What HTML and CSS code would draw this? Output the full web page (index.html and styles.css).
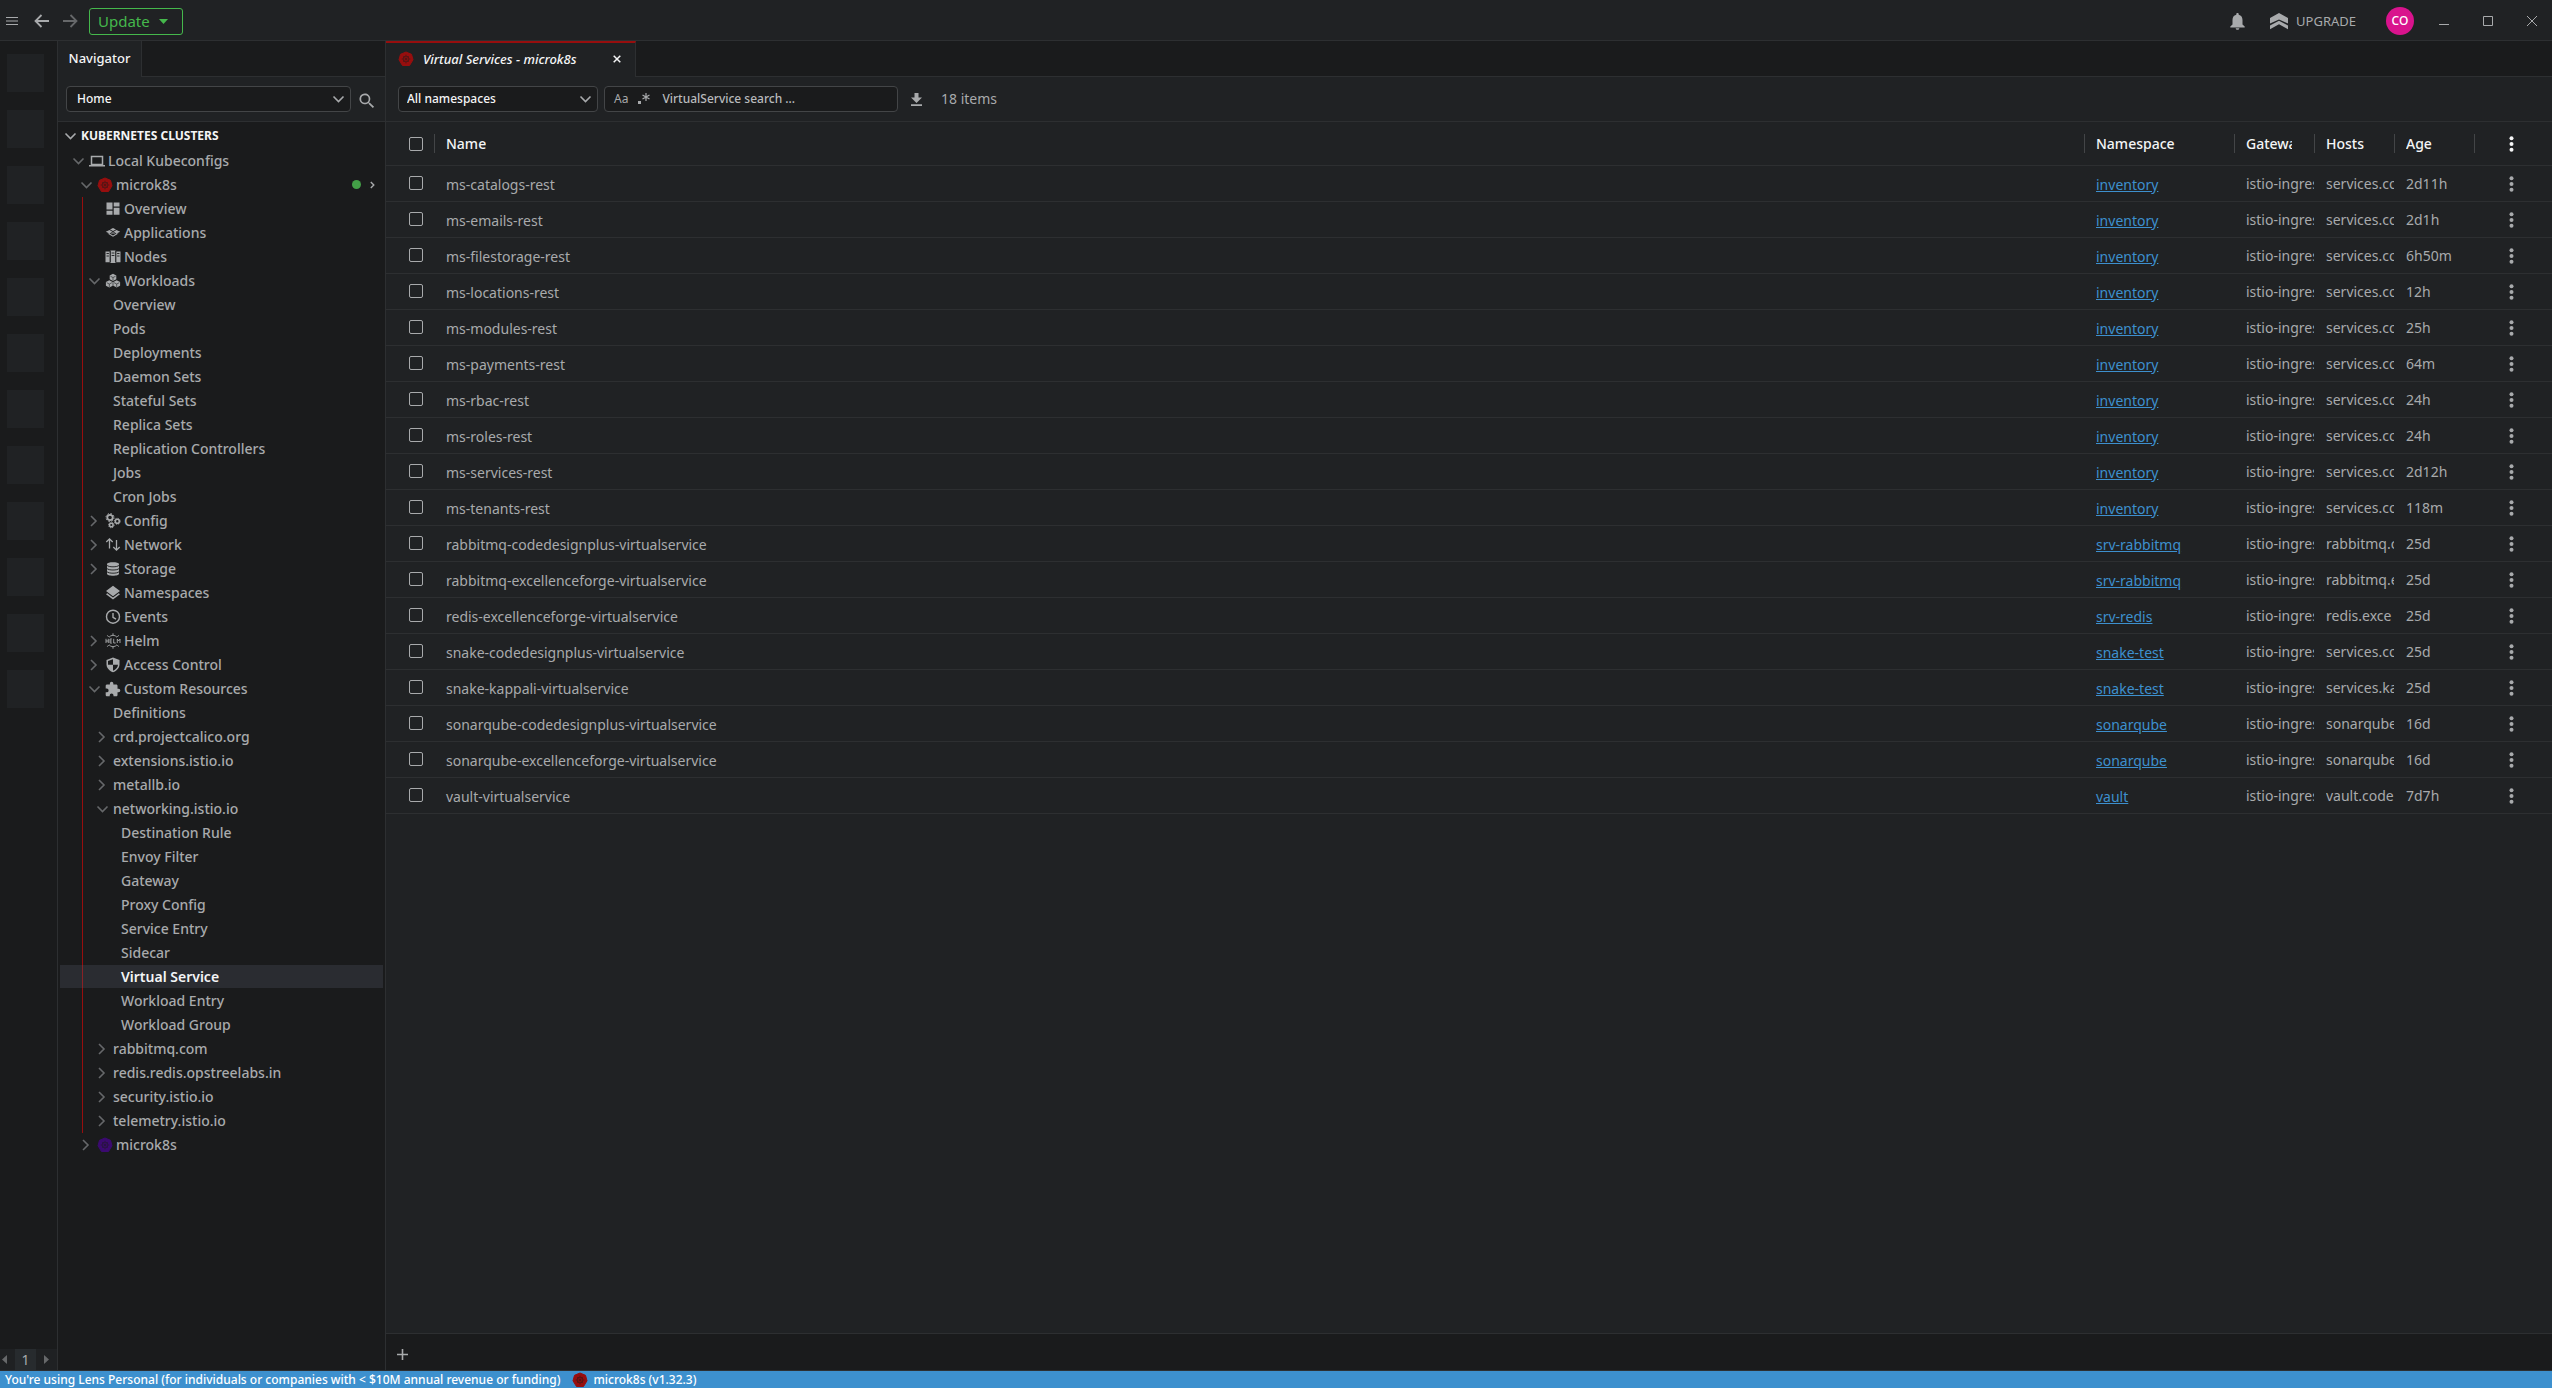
FILE: index.html
```html
<!DOCTYPE html>
<html lang="en">
<head>
<meta charset="utf-8">
<title>Virtual Services - microk8s</title>
<link rel="stylesheet" href="styles.css">
</head>
<body>
<svg class="defs" aria-hidden="true">
  <symbol id="down" viewBox="0 0 16 16"><path d="M2.500 5.500l5 5 5-5" fill="none" stroke="currentColor" stroke-width="1.600"/></symbol>
  <symbol id="right" viewBox="0 0 16 16"><path d="M4 3l5 5-5 5" fill="none" stroke="currentColor" stroke-width="1.600"/></symbol>
  <symbol id="laptop" viewBox="0 0 16 16"><path d="M2.500 3.500h11v8h-11zM0 12.700h16" fill="none" stroke="currentColor" stroke-width="1.500"/></symbol>
  <symbol id="k8s" viewBox="0 0 16 16"><path d="M8 1L13.500 3.300L15 8.800L11.500 14.500H4.500L1 8.800L2.500 3.300z" fill="currentColor" stroke="currentColor" stroke-linejoin="round"/><g fill="none" stroke="#1a1b1c" stroke-opacity=".5"><circle cx="8" cy="8" r="3"/><path d="M8 3.500v9M3.500 8h9M5 5l6 6M11 5l-6 6" stroke-width=".6"/></g></symbol>
  <symbol id="overview" viewBox="0 0 16 16"><path d="M1.500 1.500h6v7h-6zM8.700 1.500h5.800v4H8.700zM1.500 9.700h6v4h-6zM8.700 6.700h5.800v7H8.700z" fill="currentColor"/></symbol>
  <symbol id="apps" viewBox="0 0 16 16"><path d="M8 3l3 1.500L8 6 5 4.500zM4.500 5l3 1.700-3 1.700-3.700-1.700zM11.500 5l3.700 1.700-3.700 1.700-3-1.700zM8 7.300l3 1.500-3 1.700-3-1.700zM2.500 8.500L8 11.700l5.500-3.200" fill="currentColor"/></symbol>
  <symbol id="nodes" viewBox="0 0 16 16"><path d="M.5 2.500h4.400v10.800H.5zM5.500 1.500h5v12.500h-5zM11.100 2.500h4.400v10.800h-4.400z" fill="currentColor"/><path d="M1.500 4.500h2.400M1.500 7h2.400M6.600 4h2.800M6.600 6.500h2.800M12.100 4.500h2.400M12.100 7h2.400M5.200 2v11M10.800 2v11" stroke="#1a1b1c" stroke-width=".9"/></symbol>
  <symbol id="workloads" viewBox="0 0 16 16"><path d="M8 .8l3.300 1.700v3.800L8 8 4.700 6.300V2.500zM4.300 7.200l3.400 1.700v3.900l-3.400 1.700L.9 12.800V8.900zM11.700 7.200l3.400 1.700v3.900l-3.400 1.700-3.400-1.700V8.900z" fill="currentColor"/><path d="M5.500 3.300L8 4.500l2.500-1.200M1.700 9.700l2.600 1.300 2.600-1.300M9.100 9.700l2.600 1.300 2.600-1.300M8 4.500v3M4.300 11v3M11.700 11v3" stroke="#1a1b1c" stroke-width=".6" fill="none"/></symbol>
  <symbol id="config" viewBox="0 0 16 16"><g fill="none" stroke="currentColor"><circle cx="5" cy="4.500" r="2.700" stroke-width="1.800"/><circle cx="5" cy="4.500" r="4" stroke-width="1" stroke-dasharray="1.600 1.540"/><circle cx="12.300" cy="8.300" r="2" stroke-width="1.600"/><circle cx="12.300" cy="8.300" r="3" stroke-width=".9" stroke-dasharray="1.200 1.150"/><circle cx="6.300" cy="12" r="1.800" stroke-width="1.500"/><circle cx="6.300" cy="12" r="2.800" stroke-width=".9" stroke-dasharray="1.100 1.100"/></g></symbol>
  <symbol id="network" viewBox="0 0 16 16"><path d="M4.500 11.500V2M1.300 5l3.200-3.200L7.700 5M11.500 3v10M8.300 10l3.200 3.200L14.700 10" fill="none" stroke="currentColor" stroke-width="1.300"/></symbol>
  <symbol id="storage" viewBox="0 0 16 16"><path d="M2 3.200C2 .6 14 .6 14 3.200v9.600c0 2.600-12 2.600-12 0z" fill="currentColor"/><path d="M2 4.300c1.500 2 10.500 2 12 0M2 7.500c1.500 2 10.500 2 12 0M2 10.700c1.500 2 10.500 2 12 0" fill="none" stroke="#1a1b1c" stroke-width=".9"/></symbol>
  <symbol id="layers" viewBox="0 0 16 16"><path d="M8 .8l7 5.200-7 5.200L1 6zM2.300 8.200L8 12.500l5.700-4.300L15 9.200l-7 5.200-7-5.200z" fill="currentColor"/></symbol>
  <symbol id="clock" viewBox="0 0 16 16"><path d="M8 4v4.300l3 1.900M14.500 7.700a6.500 6.500 0 1 1-13 0 6.500 6.500 0 0 1 13 0z" fill="none" stroke="currentColor" stroke-width="1.400"/></symbol>
  <symbol id="helm" viewBox="0 0 16 16"><path d="M1 5.800v4.200M3.300 5.800v4.200M1 8h2.300M7 6H5v4h2M5 8h1.800M8.700 5.800V10h2M12.300 10V6l1.300 2L15 6v4M4 4.300a5 5 0 0 1 8 0M4 11.700a5 5 0 0 0 8 0M8 2.400V.3M8 13.600v2.100M3.700 4L2.300 2.300M12.300 4l1.400-1.700M3.700 12l-1.400 1.700M12.300 12l1.400 1.700" fill="none" stroke="currentColor" stroke-width=".9"/></symbol>
  <symbol id="shield" viewBox="0 0 16 16"><path d="M8 .5l6.500 2.400v4.400c0 3.800-2.700 6.500-6.500 8-3.800-1.500-6.500-4.200-6.500-8V2.900z" fill="currentColor"/><path d="M8 2.300v5.400H3V4.100zM8 7.700h5c-.2 2.700-2.200 4.800-5 6z" fill="#1a1b1c"/></symbol>
  <symbol id="puzzle" viewBox="1 0 23 23"><path d="M20.500 11H19V7c0-1.100-.9-2-2-2h-4V3.500a2.500 2.500 0 0 0-5 0V5H4c-1.100 0-2 .9-2 2v3.800h1.500a2.700 2.700 0 0 1 0 5.400H2V20c0 1.100.9 2 2 2h3.800v-1.500a2.700 2.700 0 0 1 5.400 0V22H17c1.100 0 2-.9 2-2v-4h1.500a2.500 2.500 0 0 0 0-5z" fill="currentColor"/></symbol>
  <symbol id="kebab" viewBox="0 0 16 16"><g fill="currentColor"><circle cx="7.500" cy="2.300" r="2"/><circle cx="7.500" cy="8" r="2"/><circle cx="7.500" cy="13.700" r="2"/></g></symbol>
  <symbol id="magnifier" viewBox="0 0 24 24"><path d="M15.500 14h-.8l-.3-.3A6.500 6.500 0 1 0 13.700 14.400l.3.300v.8l5 5 1.500-1.500zm-6 0a4.500 4.500 0 1 1 0-9 4.500 4.500 0 0 1 0 9z" fill="currentColor"/></symbol>
</svg>
<div class="app">
  <header class="titlebar">
    <button class="icon-btn menu" aria-label="Menu"><svg width="12" height="8" viewBox="0 0 12 8"><path d="M0 .5h12M0 4h12M0 7.500h12" stroke="currentColor"/></svg></button>
    <button class="icon-btn back" aria-label="Back"><svg width="15" height="14" viewBox="0 0 15 14"><path d="M15 7H1.500M7.500 1l-6 6 6 6" fill="none" stroke="currentColor" stroke-width="1.800"/></svg></button>
    <button class="icon-btn forward" aria-label="Forward"><svg width="15" height="14" viewBox="0 0 15 14"><path d="M0 7h13.500M7.500 1l6 6-6 6" fill="none" stroke="currentColor" stroke-width="1.800"/></svg></button>
    <button class="update">Update<svg width="9" height="5" viewBox="0 0 9 5"><path d="M0 0h9L4.500 5z" fill="currentColor"/></svg></button>
    <span class="spacer"></span>
    <button class="icon-btn bell" aria-label="Notifications"><svg width="15" height="17" viewBox="0 0 15 17"><path d="M7.500 0c.8 0 1.200.5 1.200 1.200v.6c2.600.6 3.800 2.600 3.800 5.200v4.500l2.200 2v1H.3v-1l2.200-2V7c0-2.600 1.200-4.600 3.800-5.200v-.6C6.300.5 6.700 0 7.500 0zM5.700 15.300h3.600c0 2-3.600 2-3.600 0z" fill="currentColor"/></svg></button>
    <button class="icon-btn upgrade"><svg width="18" height="17" viewBox="0 0 18 17"><path d="M9 0l9 5v5.500L9 6.500 0 10.500V5zM9 7.800l9 4.700v3.800l-9-5-9 5v-3.800z" fill="currentColor"/></svg>UPGRADE</button>
    <button class="avatar">CO</button>
    <button class="icon-btn win" aria-label="Minimize"><svg width="10" height="10" viewBox="0 0 10 10"><path d="M0 8.500h10" stroke="currentColor"/></svg></button>
    <button class="icon-btn win" aria-label="Maximize"><svg width="10" height="10" viewBox="0 0 10 10"><path d="M.5.5h9v9h-9z" fill="none" stroke="currentColor"/></svg></button>
    <button class="icon-btn win" aria-label="Close"><svg width="10" height="10" viewBox="0 0 10 10"><path d="M0 0l10 10M10 0L0 10" stroke="currentColor"/></svg></button>
  </header>
  <div class="body">
    <aside class="hotbar">
      <div class="slots"><i></i><i></i><i></i><i></i><i></i><i></i><i></i><i></i><i></i><i></i><i></i><i></i></div>
      <div class="pager"><button aria-label="Previous"><svg width="5" height="9" viewBox="0 0 5 9"><path d="M5 0v9L0 4.500z" fill="currentColor"/></svg></button><b>1</b><button aria-label="Next"><svg width="5" height="9" viewBox="0 0 5 9"><path d="M0 0v9l5-4.500z" fill="currentColor"/></svg></button></div>
    </aside>
    <aside class="navigator">
      <div class="tabs"><button class="tab nav-tab">Navigator</button></div>
      <div class="bar">
        <span class="select home"><select aria-label="Navigator view"><option>Home</option></select><svg><use href="#down"/></svg></span>
        <button class="icon-btn find" aria-label="Search"><svg width="20" height="20"><use href="#magnifier"/></svg></button>
      </div>
      <nav class="tree">
        <a href="#" class="l1"><svg class="ch"><use href="#down"/></svg>KUBERNETES CLUSTERS</a>
        <a href="#" class="l2"><svg class="ch"><use href="#down"/></svg><svg class="ic"><use href="#laptop"/></svg>Local Kubeconfigs</a>
        <a href="#" class="l3"><svg class="ch"><use href="#down"/></svg><svg class="ic red"><use href="#k8s"/></svg>microk8s<span class="state"><i></i><svg width="5" height="8" viewBox="0 0 5 8"><path d="M.8 1l3 3-3 3" fill="none" stroke="currentColor" stroke-width="1.400"/></svg></span></a>
        <div class="cluster">
          <a href="#" class="l4"><svg class="ic lone"><use href="#overview"/></svg>Overview</a>
          <a href="#" class="l4"><svg class="ic lone"><use href="#apps"/></svg>Applications</a>
          <a href="#" class="l4"><svg class="ic lone"><use href="#nodes"/></svg>Nodes</a>
          <a href="#" class="l4"><svg class="ch"><use href="#down"/></svg><svg class="ic"><use href="#workloads"/></svg>Workloads</a>
          <a href="#" class="l5 leaf">Overview</a>
          <a href="#" class="l5 leaf">Pods</a>
          <a href="#" class="l5 leaf">Deployments</a>
          <a href="#" class="l5 leaf">Daemon Sets</a>
          <a href="#" class="l5 leaf">Stateful Sets</a>
          <a href="#" class="l5 leaf">Replica Sets</a>
          <a href="#" class="l5 leaf">Replication Controllers</a>
          <a href="#" class="l5 leaf">Jobs</a>
          <a href="#" class="l5 leaf">Cron Jobs</a>
          <a href="#" class="l4"><svg class="ch"><use href="#right"/></svg><svg class="ic"><use href="#config"/></svg>Config</a>
          <a href="#" class="l4"><svg class="ch"><use href="#right"/></svg><svg class="ic"><use href="#network"/></svg>Network</a>
          <a href="#" class="l4"><svg class="ch"><use href="#right"/></svg><svg class="ic"><use href="#storage"/></svg>Storage</a>
          <a href="#" class="l4"><svg class="ic lone"><use href="#layers"/></svg>Namespaces</a>
          <a href="#" class="l4"><svg class="ic lone"><use href="#clock"/></svg>Events</a>
          <a href="#" class="l4"><svg class="ch"><use href="#right"/></svg><svg class="ic"><use href="#helm"/></svg>Helm</a>
          <a href="#" class="l4"><svg class="ch"><use href="#right"/></svg><svg class="ic"><use href="#shield"/></svg>Access Control</a>
          <a href="#" class="l4"><svg class="ch"><use href="#down"/></svg><svg class="ic"><use href="#puzzle"/></svg>Custom Resources</a>
          <a href="#" class="l5 leaf">Definitions</a>
          <a href="#" class="l5"><svg class="ch"><use href="#right"/></svg>crd.projectcalico.org</a>
          <a href="#" class="l5"><svg class="ch"><use href="#right"/></svg>extensions.istio.io</a>
          <a href="#" class="l5"><svg class="ch"><use href="#right"/></svg>metallb.io</a>
          <a href="#" class="l5"><svg class="ch"><use href="#down"/></svg>networking.istio.io</a>
          <a href="#" class="l6 leaf">Destination Rule</a>
          <a href="#" class="l6 leaf">Envoy Filter</a>
          <a href="#" class="l6 leaf">Gateway</a>
          <a href="#" class="l6 leaf">Proxy Config</a>
          <a href="#" class="l6 leaf">Service Entry</a>
          <a href="#" class="l6 leaf">Sidecar</a>
          <a href="#" class="l6 leaf current" aria-current="page">Virtual Service</a>
          <a href="#" class="l6 leaf">Workload Entry</a>
          <a href="#" class="l6 leaf">Workload Group</a>
          <a href="#" class="l5"><svg class="ch"><use href="#right"/></svg>rabbitmq.com</a>
          <a href="#" class="l5"><svg class="ch"><use href="#right"/></svg>redis.redis.opstreelabs.in</a>
          <a href="#" class="l5"><svg class="ch"><use href="#right"/></svg>security.istio.io</a>
          <a href="#" class="l5"><svg class="ch"><use href="#right"/></svg>telemetry.istio.io</a>
        </div>
        <a href="#" class="l3"><svg class="ch"><use href="#right"/></svg><svg class="ic purple"><use href="#k8s"/></svg>microk8s</a>
      </nav>
    </aside>
    <main class="main">
      <div class="tabs"><div class="tab main-tab"><svg class="red"><use href="#k8s"/></svg><span>Virtual Services - microk8s</span><button class="icon-btn" aria-label="Close tab"><svg width="8" height="8" viewBox="0 0 8 8"><path d="M.7.7l6.600 6.600M7.300.7L.7 7.300" stroke="currentColor" stroke-width="1.500"/></svg></button></div></div>
      <div class="bar tools">
        <span class="select ns"><select aria-label="Namespaces"><option>All namespaces</option></select><svg><use href="#down"/></svg></span>
        <div class="search"><button class="icon-btn case" aria-label="Match case">Aa</button><button class="icon-btn" aria-label="Regular expression"><svg width="14" height="14" viewBox="0 0 14 14"><path d="M1 9h3v3H1z" fill="currentColor"/><path d="M9 1v8M5.500 3l7 4M12.500 3l-7 4" stroke="currentColor" stroke-width="1.200"/></svg></button><input type="text" aria-label="Search" placeholder="VirtualService search ..."></div>
        <button class="icon-btn download" aria-label="Download"><svg width="11" height="13" viewBox="0 0 11 13"><path d="M3.500 0h4v4.500H11L5.500 10 0 4.500h3.500zM0 11.300h11V13H0z" fill="currentColor"/></svg></button>
        <span class="count">18 items</span>
      </div>
      <div class="content">
        <table>
          <colgroup><col class="c-check"><col><col class="c-ns"><col class="c-sm"><col class="c-sm"><col class="c-sm"><col class="c-menu"></colgroup>
          <thead><tr><th><div class="head check"><input type="checkbox" aria-label="Select all"></div></th><th><div class="head"><span>Name</span></div></th><th><div class="head"><span>Namespace</span></div></th><th><div class="head"><span>Gateway</span></div></th><th><div class="head"><span>Hosts</span></div></th><th><div class="head"><span>Age</span></div></th><th><button class="icon-btn dots" aria-label="Columns"><svg><use href="#kebab"/></svg></button></th></tr></thead>
          <tbody>
          <tr><td><input type="checkbox" aria-label="Select row"></td><td>ms-catalogs-rest</td><td><a href="#">inventory</a></td><td><div class="clip">istio-ingres</div></td><td><div class="clip">services.co</div></td><td>2d11h</td><td><button class="icon-btn dots" aria-label="Actions"><svg><use href="#kebab"/></svg></button></td></tr>
          <tr><td><input type="checkbox" aria-label="Select row"></td><td>ms-emails-rest</td><td><a href="#">inventory</a></td><td><div class="clip">istio-ingres</div></td><td><div class="clip">services.co</div></td><td>2d1h</td><td><button class="icon-btn dots" aria-label="Actions"><svg><use href="#kebab"/></svg></button></td></tr>
          <tr><td><input type="checkbox" aria-label="Select row"></td><td>ms-filestorage-rest</td><td><a href="#">inventory</a></td><td><div class="clip">istio-ingres</div></td><td><div class="clip">services.co</div></td><td>6h50m</td><td><button class="icon-btn dots" aria-label="Actions"><svg><use href="#kebab"/></svg></button></td></tr>
          <tr><td><input type="checkbox" aria-label="Select row"></td><td>ms-locations-rest</td><td><a href="#">inventory</a></td><td><div class="clip">istio-ingres</div></td><td><div class="clip">services.co</div></td><td>12h</td><td><button class="icon-btn dots" aria-label="Actions"><svg><use href="#kebab"/></svg></button></td></tr>
          <tr><td><input type="checkbox" aria-label="Select row"></td><td>ms-modules-rest</td><td><a href="#">inventory</a></td><td><div class="clip">istio-ingres</div></td><td><div class="clip">services.co</div></td><td>25h</td><td><button class="icon-btn dots" aria-label="Actions"><svg><use href="#kebab"/></svg></button></td></tr>
          <tr><td><input type="checkbox" aria-label="Select row"></td><td>ms-payments-rest</td><td><a href="#">inventory</a></td><td><div class="clip">istio-ingres</div></td><td><div class="clip">services.co</div></td><td>64m</td><td><button class="icon-btn dots" aria-label="Actions"><svg><use href="#kebab"/></svg></button></td></tr>
          <tr><td><input type="checkbox" aria-label="Select row"></td><td>ms-rbac-rest</td><td><a href="#">inventory</a></td><td><div class="clip">istio-ingres</div></td><td><div class="clip">services.co</div></td><td>24h</td><td><button class="icon-btn dots" aria-label="Actions"><svg><use href="#kebab"/></svg></button></td></tr>
          <tr><td><input type="checkbox" aria-label="Select row"></td><td>ms-roles-rest</td><td><a href="#">inventory</a></td><td><div class="clip">istio-ingres</div></td><td><div class="clip">services.co</div></td><td>24h</td><td><button class="icon-btn dots" aria-label="Actions"><svg><use href="#kebab"/></svg></button></td></tr>
          <tr><td><input type="checkbox" aria-label="Select row"></td><td>ms-services-rest</td><td><a href="#">inventory</a></td><td><div class="clip">istio-ingres</div></td><td><div class="clip">services.co</div></td><td>2d12h</td><td><button class="icon-btn dots" aria-label="Actions"><svg><use href="#kebab"/></svg></button></td></tr>
          <tr><td><input type="checkbox" aria-label="Select row"></td><td>ms-tenants-rest</td><td><a href="#">inventory</a></td><td><div class="clip">istio-ingres</div></td><td><div class="clip">services.co</div></td><td>118m</td><td><button class="icon-btn dots" aria-label="Actions"><svg><use href="#kebab"/></svg></button></td></tr>
          <tr><td><input type="checkbox" aria-label="Select row"></td><td>rabbitmq-codedesignplus-virtualservice</td><td><a href="#">srv-rabbitmq</a></td><td><div class="clip">istio-ingres</div></td><td><div class="clip">rabbitmq.c</div></td><td>25d</td><td><button class="icon-btn dots" aria-label="Actions"><svg><use href="#kebab"/></svg></button></td></tr>
          <tr><td><input type="checkbox" aria-label="Select row"></td><td>rabbitmq-excellenceforge-virtualservice</td><td><a href="#">srv-rabbitmq</a></td><td><div class="clip">istio-ingres</div></td><td><div class="clip">rabbitmq.e</div></td><td>25d</td><td><button class="icon-btn dots" aria-label="Actions"><svg><use href="#kebab"/></svg></button></td></tr>
          <tr><td><input type="checkbox" aria-label="Select row"></td><td>redis-excellenceforge-virtualservice</td><td><a href="#">srv-redis</a></td><td><div class="clip">istio-ingres</div></td><td><div class="clip">redis.exce</div></td><td>25d</td><td><button class="icon-btn dots" aria-label="Actions"><svg><use href="#kebab"/></svg></button></td></tr>
          <tr><td><input type="checkbox" aria-label="Select row"></td><td>snake-codedesignplus-virtualservice</td><td><a href="#">snake-test</a></td><td><div class="clip">istio-ingres</div></td><td><div class="clip">services.co</div></td><td>25d</td><td><button class="icon-btn dots" aria-label="Actions"><svg><use href="#kebab"/></svg></button></td></tr>
          <tr><td><input type="checkbox" aria-label="Select row"></td><td>snake-kappali-virtualservice</td><td><a href="#">snake-test</a></td><td><div class="clip">istio-ingres</div></td><td><div class="clip">services.ka</div></td><td>25d</td><td><button class="icon-btn dots" aria-label="Actions"><svg><use href="#kebab"/></svg></button></td></tr>
          <tr><td><input type="checkbox" aria-label="Select row"></td><td>sonarqube-codedesignplus-virtualservice</td><td><a href="#">sonarqube</a></td><td><div class="clip">istio-ingres</div></td><td><div class="clip">sonarqube</div></td><td>16d</td><td><button class="icon-btn dots" aria-label="Actions"><svg><use href="#kebab"/></svg></button></td></tr>
          <tr><td><input type="checkbox" aria-label="Select row"></td><td>sonarqube-excellenceforge-virtualservice</td><td><a href="#">sonarqube</a></td><td><div class="clip">istio-ingres</div></td><td><div class="clip">sonarqube</div></td><td>16d</td><td><button class="icon-btn dots" aria-label="Actions"><svg><use href="#kebab"/></svg></button></td></tr>
          <tr><td><input type="checkbox" aria-label="Select row"></td><td>vault-virtualservice</td><td><a href="#">vault</a></td><td><div class="clip">istio-ingres</div></td><td><div class="clip">vault.code</div></td><td>7d7h</td><td><button class="icon-btn dots" aria-label="Actions"><svg><use href="#kebab"/></svg></button></td></tr>
          </tbody>
        </table>
      </div>
      <div class="dock"><button class="icon-btn" aria-label="New tab"><svg width="11" height="11" viewBox="0 0 11 11"><path d="M5.500 0v11M0 5.500h11" stroke="currentColor" stroke-width="1.600"/></svg></button></div>
    </main>
  </div>
  <footer class="status"><span>You're using Lens Personal (for individuals or companies with &lt; $10M annual revenue or funding)</span><svg class="red"><use href="#k8s"/></svg><span>microk8s (v1.32.3)</span></footer>
</div>
</body>
</html>
```
FILE: styles.css
```css
:root {
  --bg: #202224;
  --dark: #1a1b1c;
  --line: #2d2f31;
  --text: #a8aaac;
  --bright: #f4f5f6;
  --red: #970e0e;
}
* { box-sizing: border-box; }
body { margin: 0; background: var(--bg); color: var(--text); font: 14px/20px "Noto Sans", sans-serif; }
button, select, input { font: inherit; color: inherit; margin: 0; }
a { color: inherit; text-decoration: none; }
svg { display: block; flex: none; }
.defs { position: absolute; width: 0; height: 0; }
.red { color: var(--red); }
.purple { color: #3b0a70; }
.app { display: flex; flex-direction: column; height: 100vh; }
.spacer { flex: 1; }
.icon-btn { display: flex; align-items: center; justify-content: center; padding: 0; border: 0; background: none; }

.titlebar { display: flex; align-items: center; height: 41px; padding: 2px 15px 0 6px; border-bottom: 1px solid var(--line); }
.menu { width: 12px; margin-right: 16px; }
.back { margin-right: 14px; }
.forward { color: #66686a; margin-right: 11px; }
.update { display: flex; align-items: center; justify-content: space-between; width: 94px; height: 27px; padding: 0 14px 0 8px; border: 1px solid #45b84c; border-radius: 3px; background: none; color: #45b84c; font-size: 15px; line-height: 20px; }
.upgrade { gap: 8px; margin: 0 30px 0 25px; font-size: 13px; }
.avatar { width: 28px; height: 28px; margin-right: 3px; padding: 0; border: 0; border-radius: 50%; background: #d9138d; color: #fff; font-size: 12px; font-weight: 500; }
.win { width: 34px; margin-left: 10px; }
.win:last-child { width: 10px; margin-left: 22px; }

.body { display: flex; flex: 1; min-height: 0; border-bottom: 1px solid var(--line); }
.hotbar { display: flex; flex-direction: column; justify-content: space-between; width: 58px; border-right: 1px solid var(--line); background: var(--dark); }
.slots { display: flex; flex-direction: column; gap: 18px; padding: 13px 7px; }
.slots i { width: 37px; height: 38px; background: var(--bg); }
.pager { display: flex; align-items: center; justify-content: space-between; height: 21px; padding: 0 8px 0 2px; background: #1f2123; }
.pager button { padding: 0; border: 0; background: none; color: #66686a; }
.pager b { width: 21px; line-height: 21px; background: #272b2e; text-align: center; font-weight: 400; }

.navigator { width: 328px; display: flex; flex-direction: column; border-right: 1px solid var(--line); background: var(--dark); }
.tabs { display: flex; height: 36px; border-bottom: 1px solid var(--line); background: var(--dark); }
.tab { height: 36px; border: 0; border-right: 1px solid var(--line); background: var(--bg); color: var(--bright); font-size: 13px; font-weight: 500; }
.nav-tab { width: 84px; padding: 0 0 3px; }
.bar { display: flex; align-items: center; height: 45px; padding: 0 8px; border-bottom: 1px solid var(--line); background: var(--bg); }
.select { position: relative; display: block; height: 26px; }
.select select { appearance: none; width: 100%; height: 26px; padding: 0 24px 0 10px; border: 1px solid #434547; border-radius: 4px; background: var(--dark); color: var(--bright); font-size: 12px; font-weight: 500; }
.select svg { position: absolute; right: 4px; top: 5px; width: 16px; height: 16px; }
.select.ns select { padding-left: 8px; }
.home { flex: 1; }
.find { width: 20px; margin: 3px 0 0 6px; }

.tree { padding: 3px 2px; }
.tree a { display: flex; align-items: center; height: 24px; border-bottom: 1px solid var(--dark); background-clip: padding-box; font-weight: 500; white-space: nowrap; }
.tree .ch { width: 16px; height: 16px; margin-right: 2px; color: #66686a; }
.tree .ic { width: 16px; height: 16px; margin-right: 3px; }
.tree .lone { margin-left: 18px; }
.l1 { padding-left: 3px; }
.tree .l1 { padding-bottom: 2px; color: var(--bright); font-size: 12px; font-weight: 700; }
.l1 .ch { color: var(--text); }
.l2 { padding-left: 11px; }
.l3 { padding-left: 19px; }
.l4 { padding-left: 27px; }
.l5 { padding-left: 35px; }
.l5.leaf { padding-left: 53px; }
.l6.leaf { padding-left: 61px; }
.cluster { background: linear-gradient(var(--red), var(--red)) 22px 0 / 1px 100% no-repeat; }
.tree .cluster a { border-bottom-color: transparent; }
.tree .current { background: rgba(90, 95, 110, .25) padding-box; color: var(--bright); font-weight: 600; }
.state { display: flex; align-items: center; gap: 9px; margin-left: auto; padding-right: 8px; }
.state i { width: 9px; height: 9px; border-radius: 50%; background: #43a047; }

.main { display: flex; flex: 1; flex-direction: column; min-width: 0; }
.main-tab { display: flex; align-items: center; width: 250px; padding: 0 14px 2px 12px; border-top: 2px solid var(--red); font-style: italic; font-weight: 500; }
.main-tab svg.red { width: 16px; height: 16px; margin-right: 9px; }
.main-tab button { margin-left: auto; }
.tools { padding: 0 12px; }
.ns { width: 200px; }
.search { display: flex; align-items: center; width: 294px; height: 26px; margin-left: 6px; padding-left: 9px; border: 1px solid #434547; border-radius: 4px; background: var(--dark); font-size: 12px; }
.case { margin-right: 9px; }
.search input { flex: 1; min-width: 0; padding: 0 0 0 11px; border: 0; outline: 0; background: none; font-weight: 500; }
.search input::placeholder { color: #b8babc; }
.download { margin: 0 19px 0 13px; }

.content { flex: 1; min-height: 0; overflow: hidden; }
table { width: 100%; table-layout: fixed; border-collapse: separate; border-spacing: 0; }
.c-check { width: 49px; }
.c-ns { width: 150px; }
.c-sm { width: 80px; }
.c-menu { width: 77px; }
th { height: 44px; padding: 0; border-bottom: 1px solid var(--line); color: var(--bright); font-weight: 500; text-align: left; }
.head { display: flex; align-items: center; height: 19px; padding: 0 22px 0 11px; border-right: 1px solid #434547; }
.head span { overflow: hidden; white-space: nowrap; }
.head.check { padding: 0 0 0 23px; }
td { height: 36px; padding: 0 0 0 11px; border-bottom: 1px solid var(--line); white-space: nowrap; }
td:first-child { padding: 0 0 2px 23px; }
td:nth-child(2), td:nth-child(3) { padding-top: 2px; }
.clip { margin-right: 1px; overflow: hidden; }
td a { color: #3d90ce; text-decoration: underline; }
input[type="checkbox"] { appearance: none; display: block; width: 14px; height: 14px; border: 1px solid var(--text); border-radius: 2px; }
.dots { width: 73px; }
td .dots { width: 51px; }
.dots svg { width: 16px; height: 16px; }
.dock { display: flex; align-items: center; height: 37px; padding: 4px 11px 0; border-top: 1px solid var(--line); background: var(--dark); }

.status { display: flex; align-items: center; height: 17px; padding-left: 5px; background: #3d90ce; color: #fff; font-size: 12px; font-weight: 500; line-height: 17px; white-space: nowrap; }
.status svg { width: 16px; height: 16px; margin: 0 5px 0 12px; }
```
